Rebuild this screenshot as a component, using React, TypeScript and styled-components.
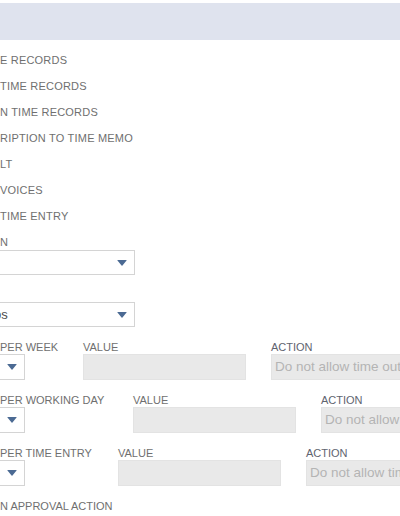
import * as React from 'react';
import styled, { createGlobalStyle } from 'styled-components';

const GlobalStyle = createGlobalStyle`
  html, body {
    margin: 0;
    padding: 0;
    background: #ffffff;
  }
  body {
    font-family: 'Liberation Sans', Arial, sans-serif;
  }
`;

const Page = styled.div`
  width: 400px;
  height: 516px;
  overflow: hidden;
  padding-top: 3px;
  box-sizing: border-box;
`;

const Header = styled.div`
  height: 37px;
  background-color: #dfe3ee;
`;

const OptionList = styled.div`
  display: flex;
  flex-direction: column;
  margin-top: 7px;
`;

const OptionRow = styled.div`
  height: 26px;
  line-height: 26px;
  font-size: 11px;
  letter-spacing: 0.2px;
  color: #6f6f6f;
  white-space: nowrap;
`;

const Field = styled.div<{ top: number }>`
  display: flex;
  flex-direction: column;
  margin-top: ${(props) => props.top}px;
`;

const Label = styled.div`
  height: 13px;
  line-height: 13px;
  font-size: 11px;
  color: #6f6f6f;
  white-space: nowrap;
`;

const Select = styled.div<{ width: number; height: number; gapTop: number }>`
  display: flex;
  align-items: center;
  justify-content: space-between;
  box-sizing: border-box;
  width: ${(props) => props.width}px;
  height: ${(props) => props.height}px;
  margin-top: ${(props) => props.gapTop}px;
  margin-left: -6px;
  padding: 0 7px 0 6px;
  border: 1px solid #d4d4d4;
  background: #ffffff;
  font-size: 13px;
  color: #4d4d4d;
`;

const SelectValue = styled.span`
  margin-left: -7px;
`;

const Arrow = styled.span`
  display: block;
  width: 0;
  height: 0;
  border-left: 5.5px solid transparent;
  border-right: 5.5px solid transparent;
  border-top: 6px solid #4b6a93;
  border-radius: 1px;
`;

const LimitRow = styled.div`
  display: flex;
  gap: 25px;
  margin-top: 14px;
`;

const Column = styled.div<{ width: number }>`
  display: flex;
  flex-direction: column;
  flex: 0 0 ${(props) => props.width}px;
  width: ${(props) => props.width}px;
`;

const ActionLabel = styled(Label)`
  color: #5f6470;
`;

const Input = styled.div<{ width: number }>`
  box-sizing: border-box;
  width: ${(props) => props.width}px;
  height: 26px;
  background: #e9e9e9;
  border: 1px solid #e3e3e3;
  padding: 0 3px;
  line-height: 24px;
  font-size: 13.5px;
  color: #b4b4b4;
  white-space: nowrap;
  overflow: hidden;
`;

const LastLabel = styled(Label)`
  margin-top: 14px;
`;

const options = [
  'E RECORDS',
  'TIME RECORDS',
  'N TIME RECORDS',
  'RIPTION TO TIME MEMO',
  'LT',
  'VOICES',
  'TIME ENTRY',
];

const limits = [
  { label: 'PER WEEK', width: 58 },
  { label: 'PER WORKING DAY', width: 108 },
  { label: 'PER TIME ENTRY', width: 93 },
];

const App = () => {
  return (
    <>
      <GlobalStyle />
      <Page>
        <Header />
        <OptionList>
          {options.map((o) => (
            <OptionRow key={o}>{o}</OptionRow>
          ))}
        </OptionList>
        <Field top={7}>
          <Label>N</Label>
          <Select width={141} height={25} gapTop={1}>
            <span></span>
            <Arrow />
          </Select>
        </Field>
        <Field top={13}>
          <Label></Label>
          <Select width={141} height={25} gapTop={1}>
            <SelectValue>os</SelectValue>
            <Arrow />
          </Select>
        </Field>
        {limits.map((l) => (
          <LimitRow key={l.label}>
            <Column width={l.width}>
              <Label>{l.label}</Label>
              <Select width={31} height={26} gapTop={0}>
                <span></span>
                <Arrow />
              </Select>
            </Column>
            <Column width={163}>
              <Label>VALUE</Label>
              <Input width={163} />
            </Column>
            <Column width={200}>
              <ActionLabel>ACTION</ActionLabel>
              <Input width={200}>Do not allow time outside the limit</Input>
            </Column>
          </LimitRow>
        ))}
        <LastLabel>N APPROVAL ACTION</LastLabel>
      </Page>
    </>
  );
};

export default App;
